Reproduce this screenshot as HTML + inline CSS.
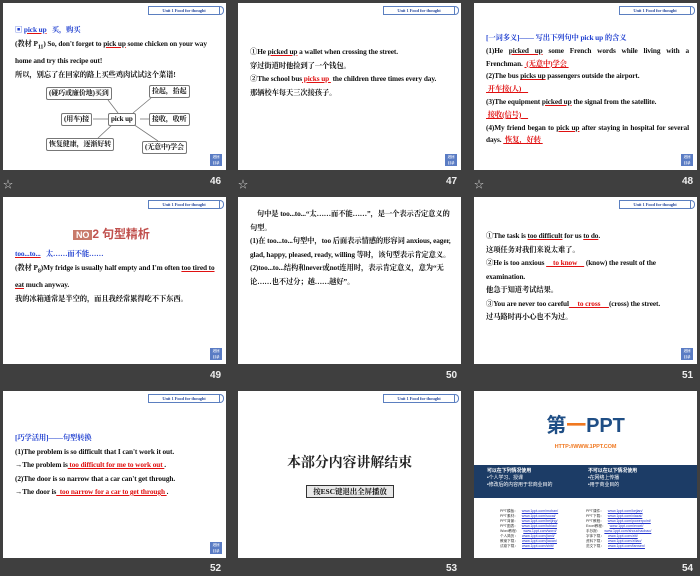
<!DOCTYPE html>
<html><head><meta charset="utf-8"><style>
body{margin:0;width:700px;height:576px;background:#3f3f3f;position:relative;overflow:hidden;font-family:"Liberation Serif","Noto Serif CJK SC",serif;}
.s{position:absolute;width:223px;height:167px;background:#fff;overflow:hidden;font-size:7.3px;line-height:13.5px;letter-spacing:-0.1px;color:#111;font-weight:bold}
.h{position:absolute;right:6px;top:3px;width:70px;height:7px;border:1px solid #5b7fc0;font-size:4.5px;line-height:7px;color:#2f4fa0;text-align:center}
.h:after{content:"";position:absolute;right:-5px;top:-1px;width:5px;height:7px;border:1px solid #5b7fc0;border-left:none;border-radius:0 4px 4px 0}
.ic{position:absolute;right:4px;bottom:4px;width:12px;height:12px;background:#5a7cc4;color:#fff;font-size:3.5px;line-height:6px;text-align:center}
.n{position:absolute;color:#eee;font:bold 10px "Liberation Sans",sans-serif}
.st{position:absolute;color:#ccc;font-size:10px}
.b{position:absolute;left:12px;right:8px}
.bl{color:#1f3fd0}.r{color:#e01010}
u{text-decoration-color:#e01010}
.box{position:absolute;border:1px solid #777;border-radius:2px;font-size:7px;line-height:11px;padding:0 2px;background:#fff}
.lk{position:absolute;font-size:3.6px;line-height:5px;font-weight:normal;color:#333;letter-spacing:0}
.lk span{color:#2233cc;text-decoration:underline;margin-left:4px}
</style></head><body>

<div class="s" style="left:3px;top:3px"><div class="h">Unit 1 Food for thought</div>
<div class="b" style="top:20px;line-height:14px"><span class="bl">▣ <u>pick up</u> &nbsp; 买，购买</span><br>(教材 P<sub>11</sub>) So, don't forget to <u>pick up</u> some chicken on your way home and try this recipe out!<br>所以，别忘了在回家的路上买些鸡肉试试这个菜谱!</div>
<svg style="position:absolute;left:0;top:0" width="223" height="167"><g stroke="#777" stroke-width="0.8"><line x1="105" y1="97" x2="115" y2="110"/><line x1="130" y1="110" x2="148" y2="95"/><line x1="90" y1="116" x2="105" y2="116"/><line x1="137" y1="116" x2="147" y2="116"/><line x1="110" y1="121" x2="95" y2="135"/><line x1="130" y1="121" x2="155" y2="138"/></g></svg>
<div class="box" style="left:43px;top:84px">(碰巧或廉价地)买到</div>
<div class="box" style="left:146px;top:82px">捡起，拾起</div>
<div class="box" style="left:58px;top:110px">(用车)接</div>
<div class="box" style="left:105px;top:110px">pick up</div>
<div class="box" style="left:146px;top:110px">接收，收听</div>
<div class="box" style="left:43px;top:135px">恢复健康，逐渐好转</div>
<div class="box" style="left:139px;top:138px">(无意中)学会</div>
<div class="ic">返回<br>目录</div></div>
<div class="st" style="left:3px;top:176px">☆</div><div class="n" style="left:210px;top:176px">46</div>

<div class="s" style="left:238px;top:3px"><div class="h">Unit 1 Food for thought</div>
<div class="b" style="top:42px;right:4px">①He <u>picked up</u> a wallet when crossing the street.<br>穿过街道时他捡到了一个钱包。<br>②The school bus<u class="r">&nbsp;picks up&nbsp;</u> the children three times every day.<br>那辆校车每天三次接孩子。</div>
<div class="ic">返回<br>目录</div></div>
<div class="st" style="left:238px;top:176px">☆</div><div class="n" style="left:446px;top:176px">47</div>

<div class="s" style="left:474px;top:3px"><div class="h">Unit 1 Food for thought</div>
<div class="b" style="top:29px;text-align:justify;line-height:12.8px"><span class="bl">[一词多义]—— 写出下列句中 pick up 的含义</span><br>(1)He <u>picked up</u> some French words while living with a Frenchman. <u class="r">&nbsp;(无意中)学会&nbsp;</u><br>(2)The bus <u>picks up</u> passengers outside the airport.<br><u class="r">&nbsp;开车接(人)&nbsp;&nbsp;&nbsp;&nbsp;</u><br>(3)The equipment <u>picked up</u> the signal from the satellite.<br><u class="r">&nbsp;接收(信号)&nbsp;&nbsp;&nbsp;&nbsp;</u><br>(4)My friend began to <u>pick up</u> after staying in hospital for several days. <u class="r">&nbsp;恢复，好转&nbsp;</u></div>
<div class="ic">返回<br>目录</div></div>
<div class="st" style="left:474px;top:176px">☆</div><div class="n" style="left:682px;top:176px">48</div>

<div class="s" style="left:3px;top:197px"><div class="h">Unit 1 Food for thought</div>
<div style="position:absolute;left:70px;top:28px;font:bold 12px 'Liberation Sans','Noto Sans CJK SC',sans-serif;color:#c0504d"><span style="background:#c87a6a;color:#fff;padding:0 3px;font-size:9px">NO</span>2 句型精析</div>
<div class="b" style="top:50px"><span class="bl"><u>too...to...</u> &nbsp; 太……而不能……</span><br>(教材 P<sub>8</sub>)My fridge is usually half empty and I'm often <u>too tired to eat</u> much anyway.<br>我的冰箱通常是半空的，而且我经常累得吃不下东西。</div>
<div class="ic">返回<br>目录</div></div>
<div class="n" style="left:210px;top:370px">49</div>

<div class="s" style="left:238px;top:197px">
<div class="b" style="top:10px">&nbsp;&nbsp;&nbsp;&nbsp;句中是 too...to...“太……而不能……”，是一个表示否定意义的句型。<br>(1)在 too...to...句型中，too 后面表示情感的形容词 anxious, eager, glad, happy, pleased, ready, willing 等时，该句型表示肯定意义。<br>(2)too...to...结构和never或not连用时，表示肯定意义，意为“无论……也不过分；越……越好”。</div>
</div>
<div class="n" style="left:446px;top:370px">50</div>

<div class="s" style="left:474px;top:197px"><div class="h">Unit 1 Food for thought</div>
<div class="b" style="top:32px">①The task is <u>too difficult</u> for us <u>to do</u>.<br>这项任务对我们来说太难了。<br>②He is too anxious <u class="r">&nbsp;&nbsp;&nbsp;&nbsp;to know&nbsp;&nbsp;&nbsp;&nbsp;</u> (know) the result of the examination.<br>他急于知道考试结果。<br>③You are never too careful<u class="r">&nbsp;&nbsp;&nbsp;&nbsp;&nbsp;to cross&nbsp;&nbsp;&nbsp;&nbsp;&nbsp;</u>(cross) the street.<br>过马路时再小心也不为过。</div>
<div class="ic">返回<br>目录</div></div>
<div class="n" style="left:682px;top:370px">51</div>

<div class="s" style="left:3px;top:391px"><div class="h">Unit 1 Food for thought</div>
<div class="b" style="top:40px"><span class="bl">[巧学活用]——句型转换</span><br>(1)The problem is so difficult that I can't work it out.<br>→The problem is<u class="r">&nbsp;too difficult for me to work out&nbsp;</u>.<br>(2)The door is so narrow that a car can't get through.<br>→The door is<u class="r">&nbsp;&nbsp;too narrow for a car to get through&nbsp;</u>.</div>
<div class="ic">返回<br>目录</div></div>
<div class="n" style="left:210px;top:563px">52</div>

<div class="s" style="left:238px;top:391px"><div class="h">Unit 1 Food for thought</div>
<div style="position:absolute;left:0;right:0;top:64px;text-align:center;font-size:14px;line-height:18px;color:#222">本部分内容讲解结束</div>
<div style="position:absolute;left:68px;top:94px;width:86px;border:1px solid #333;background:#e8e8e8;font-size:7.5px;line-height:11px;text-align:center">按ESC键退出全屏播放</div>
</div>
<div class="n" style="left:446px;top:563px">53</div>

<div class="s" style="left:474px;top:391px;font-family:'Liberation Sans','Noto Sans CJK SC',sans-serif">
<div style="position:absolute;left:0;right:0;top:23px;text-align:center;font-size:20px;line-height:24px;color:#1f4e85">第<span style="color:#f07820">一</span>PPT</div>
<div style="position:absolute;left:0;right:0;top:50px;text-align:center;font-size:5.5px;color:#f07820">HTTP://WWW.1PPT.COM</div>
<div style="position:absolute;left:0;right:0;top:74px;height:33px;background:#1c3c66;color:#fff;font-size:5px;line-height:7px;font-weight:normal"><div style="position:absolute;left:13px;top:3px"><b>可以在下列情况使用</b><br>•个人学习、授课<br>•修改后的内容用于非商业目的</div><div style="position:absolute;left:114px;top:3px"><b>不可以在以下情况使用</b><br>•在网络上传播<br>•用于商业目的</div></div>
<div class="lk" style="left:26px;top:118px">PPT模板：<span>www.1ppt.com/moban/</span><br>PPT素材：<span>www.1ppt.com/sucai/</span><br>PPT背景：<span>www.1ppt.com/beijing/</span><br>PPT图表：<span>www.1ppt.com/tubiao/</span><br>Word教程：<span>www.1ppt.com/word/</span><br>个人简历：<span>www.1ppt.com/jianli/</span><br>教案下载：<span>www.1ppt.com/jiaoan/</span><br>试卷下载：<span>www.1ppt.com/shiti/</span></div>
<div class="lk" style="left:112px;top:118px">PPT课件：<span>www.1ppt.com/kejian/</span><br>PPT下载：<span>www.1ppt.com/xiazai/</span><br>PPT教程：<span>www.1ppt.com/powerpoint/</span><br>Excel教程：<span>www.1ppt.com/excel/</span><br>手抄报：<span>www.1ppt.com/shouchaobao/</span><br>字体下载：<span>www.1ppt.com/ziti/</span><br>资料下载：<span>www.1ppt.com/ziliao/</span><br>范文下载：<span>www.1ppt.com/fanwen/</span></div>
</div>
<div class="n" style="left:682px;top:563px">54</div>
</body></html>
